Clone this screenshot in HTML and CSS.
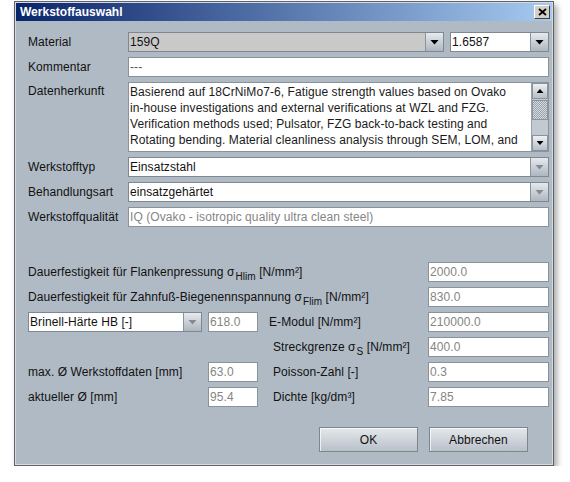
FILE: index.html
```html
<!DOCTYPE html>
<html>
<head>
<meta charset="utf-8">
<link rel="stylesheet" href="styles.css">
</head>
<body>
<div class="window">
  <div class="titlebar">
    <span class="title">Werkstoffauswahl</span>
    <span class="close"><svg width="9" height="8" viewBox="0 0 9 8"><path d="M1 1 L8 7 M8 1 L1 7" stroke="#000" stroke-width="1.8" fill="none"/></svg></span>
  </div>
  <div class="content">
    <div class="form-top">
      <div class="lbl">Material</div>
      <div class="material-row">
        <div class="combo combo-gray combo-mat"><span class="val">159Q</span><span class="arrow"><i class="tri"></i></span></div>
        <div class="combo combo-num"><span class="val">1.6587</span><span class="arrow"><i class="tri"></i></span></div>
      </div>

      <div class="lbl">Kommentar</div>
      <div class="field dim">---</div>

      <div class="lbl lbl-top">Datenherkunft</div>
      <div class="textarea">
        <div class="ta-text">Basierend auf 18CrNiMo7-6, Fatigue strength values based on Ovako<br>in-house investigations and external verifications at WZL and FZG.<br>Verification methods used; Pulsator, FZG back-to-back testing and<br>Rotating bending. Material cleanliness analysis through SEM, LOM, and</div>
        <div class="scrollbar">
          <div class="sb-btn"><i class="tri-up"></i></div>
          <div class="sb-track"><div class="sb-thumb"></div></div>
          <div class="sb-btn"><i class="tri-down"></i></div>
        </div>
      </div>

      <div class="lbl">Werkstofftyp</div>
      <div class="combo"><span class="val">Einsatzstahl</span><span class="arrow"><i class="tri tri-dis"></i></span></div>

      <div class="lbl">Behandlungsart</div>
      <div class="combo"><span class="val">einsatzgehärtet</span><span class="arrow"><i class="tri tri-dis"></i></span></div>

      <div class="lbl">Werkstoffqualität</div>
      <div class="field gray">IQ (Ovako - isotropic quality ultra clean steel)</div>
    </div>

    <div class="form-bottom">
      <div class="lbl span3"><span>Dauerfestigkeit für Flankenpressung σ<sub>Hlim</sub> [N/mm²]</span></div>
      <div class="field gray c4">2000.0</div>

      <div class="lbl span3"><span>Dauerfestigkeit für Zahnfuß-Biegenennspannung σ<sub>Flim</sub> [N/mm²]</span></div>
      <div class="field gray c4">830.0</div>

      <div class="combo combo-brinell c1"><span class="val">Brinell-Härte HB [-]</span><span class="arrow"><i class="tri tri-dis"></i></span></div>
      <div class="field gray c2">618.0</div>
      <div class="lbl mid mid-e c3">E-Modul [N/mm²]</div>
      <div class="field gray c4">210000.0</div>

      <div class="lbl mid c3"><span>Streckgrenze σ<sub>S</sub> [N/mm²]</span></div>
      <div class="field gray c4">400.0</div>

      <div class="lbl c1">max. Ø Werkstoffdaten [mm]</div>
      <div class="field gray c2">63.0</div>
      <div class="lbl mid c3">Poisson-Zahl [-]</div>
      <div class="field gray c4">0.3</div>

      <div class="lbl c1">aktueller Ø [mm]</div>
      <div class="field gray c2">95.4</div>
      <div class="lbl mid c3">Dichte [kg/dm³]</div>
      <div class="field gray c4">7.85</div>
    </div>

    <div class="buttons">
      <div class="btn">OK</div>
      <div class="btn">Abbrechen</div>
    </div>
  </div>
</div>
</body>
</html>
```
FILE: styles.css
```css
* { box-sizing: border-box; }
html, body { margin: 0; padding: 0; background: #ffffff; }
body {
  font-family: "Liberation Sans", Arial, sans-serif;
  font-size: 12px;
  letter-spacing: 0.08px;
  color: #111;
}

.window {
  margin: 1px 0 0 14px;
  width: 540px;
  border: 1px solid #5e636a;
  padding: 1px;
  background: #d6dade;
  box-shadow: 3px 4px 6px rgba(0, 0, 0, 0.35);
}

.titlebar {
  height: 18px;
  background: linear-gradient(to right, #0a246a, #a6caf0);
  display: flex;
  align-items: flex-start;
  justify-content: space-between;
}
.title {
  color: #fff;
  font-weight: bold;
  line-height: 18px;
  padding-left: 4px;
  letter-spacing: 0;
}
.close {
  margin-top: 2px;
  margin-right: 2px;
  width: 16px;
  height: 14px;
  background: #d4d0c8;
  border: 1px solid;
  border-color: #ffffff #404040 #404040 #ffffff;
  display: flex;
  align-items: center;
  justify-content: center;
}

.content {
  background: #b0bac4;
  padding: 11px 3px 12px 12px;
}

.form-top {
  display: grid;
  grid-template-columns: 100px 421px;
  grid-template-rows: 20px 20px 70px 20px 20px 20px;
  row-gap: 5px;
}

.lbl {
  display: flex;
  align-items: center;
  white-space: nowrap;
  color: #111;
}
.lbl-top { align-items: flex-start; padding-top: 2px; }

.material-row {
  display: flex;
  gap: 6px;
}

.field {
  height: 20px;
  border: 1px solid #8a929a;
  background: #fff;
  padding-left: 1px;
  display: flex;
  align-items: center;
  white-space: nowrap;
  overflow: hidden;
}
.field.gray { color: #858585; }
.field.dim { color: #555; }

.combo {
  height: 20px;
  border: 1px solid #7f8790;
  background: #fff;
  display: flex;
  align-items: stretch;
}
.combo .val {
  flex: 1;
  padding-left: 1px;
  display: flex;
  align-items: center;
  white-space: nowrap;
  overflow: hidden;
}
.combo-gray { background: #c9c9c9; }
.combo-mat { width: 316px; }
.combo-num { width: 99px; }
.combo-brinell { width: 174px; }

.arrow {
  width: 18px;
  border-left: 1px solid #8a929a;
  background: linear-gradient(#e6eaee, #aeb6bf);
  display: flex;
  align-items: center;
  justify-content: center;
}
.tri {
  display: block;
  width: 9px;
  height: 5px;
  background: #000;
  clip-path: polygon(0 0, 100% 0, 50% 100%);
}
.tri-dis { background: #858a90; }

.textarea {
  border: 1px solid #8a929a;
  background: #fff;
  display: flex;
  overflow: hidden;
}
.ta-text {
  flex: 1;
  padding: 1px 0 0 1px;
  line-height: 16px;
  white-space: nowrap;
  overflow: hidden;
  color: #1a1a1a;
}
.scrollbar {
  width: 17px;
  display: flex;
  flex-direction: column;
  background: #c2c9d1;
  border-left: 1px solid #9aa2aa;
}
.sb-btn {
  height: 16px;
  border: 1px solid #8a929a;
  background: linear-gradient(#eef1f4, #b6bec7);
  display: flex;
  align-items: center;
  justify-content: center;
}
.sb-track {
  flex: 1;
  padding-top: 1px;
}
.sb-thumb {
  height: 20px;
  border: 1px solid #8a929a;
  background-color: #b8c0c8;
  background-image: repeating-conic-gradient(#9aa2ab 0 25%, #d4dae0 0 50%);
  background-size: 2px 2px;
}
.tri-up, .tri-down {
  display: block;
  width: 7px;
  height: 4px;
  background: #000;
}
.tri-up { clip-path: polygon(50% 0, 100% 100%, 0 100%); }
.tri-down { clip-path: polygon(0 0, 100% 0, 50% 100%); }

.form-bottom {
  margin-top: 35px;
  display: grid;
  grid-template-columns: 180px 50px 170px 121px;
  grid-auto-rows: 20px;
  row-gap: 5px;
}
.span3 { grid-column: 1 / 4; }
.c1 { grid-column: 1; }
.c2 { grid-column: 2; }
.c3 { grid-column: 3; }
.c4 { grid-column: 4; }
.mid { padding-left: 15px; }
.mid-e { padding-left: 11px; }

sub {
  font-size: 10px;
  line-height: 0;
  vertical-align: -4px;
  margin-left: 1px;
}

.buttons {
  margin-top: 20px;
  display: flex;
  justify-content: flex-end;
  gap: 11px;
  padding-right: 21px;
}
.btn {
  width: 99px;
  height: 25px;
  border: 1px solid #7d858d;
  background: linear-gradient(#e4e8ec, #b8c0c8);
  box-shadow: inset 1px 1px 0 rgba(255, 255, 255, 0.7);
  display: flex;
  align-items: center;
  justify-content: center;
  color: #111;
}
```
